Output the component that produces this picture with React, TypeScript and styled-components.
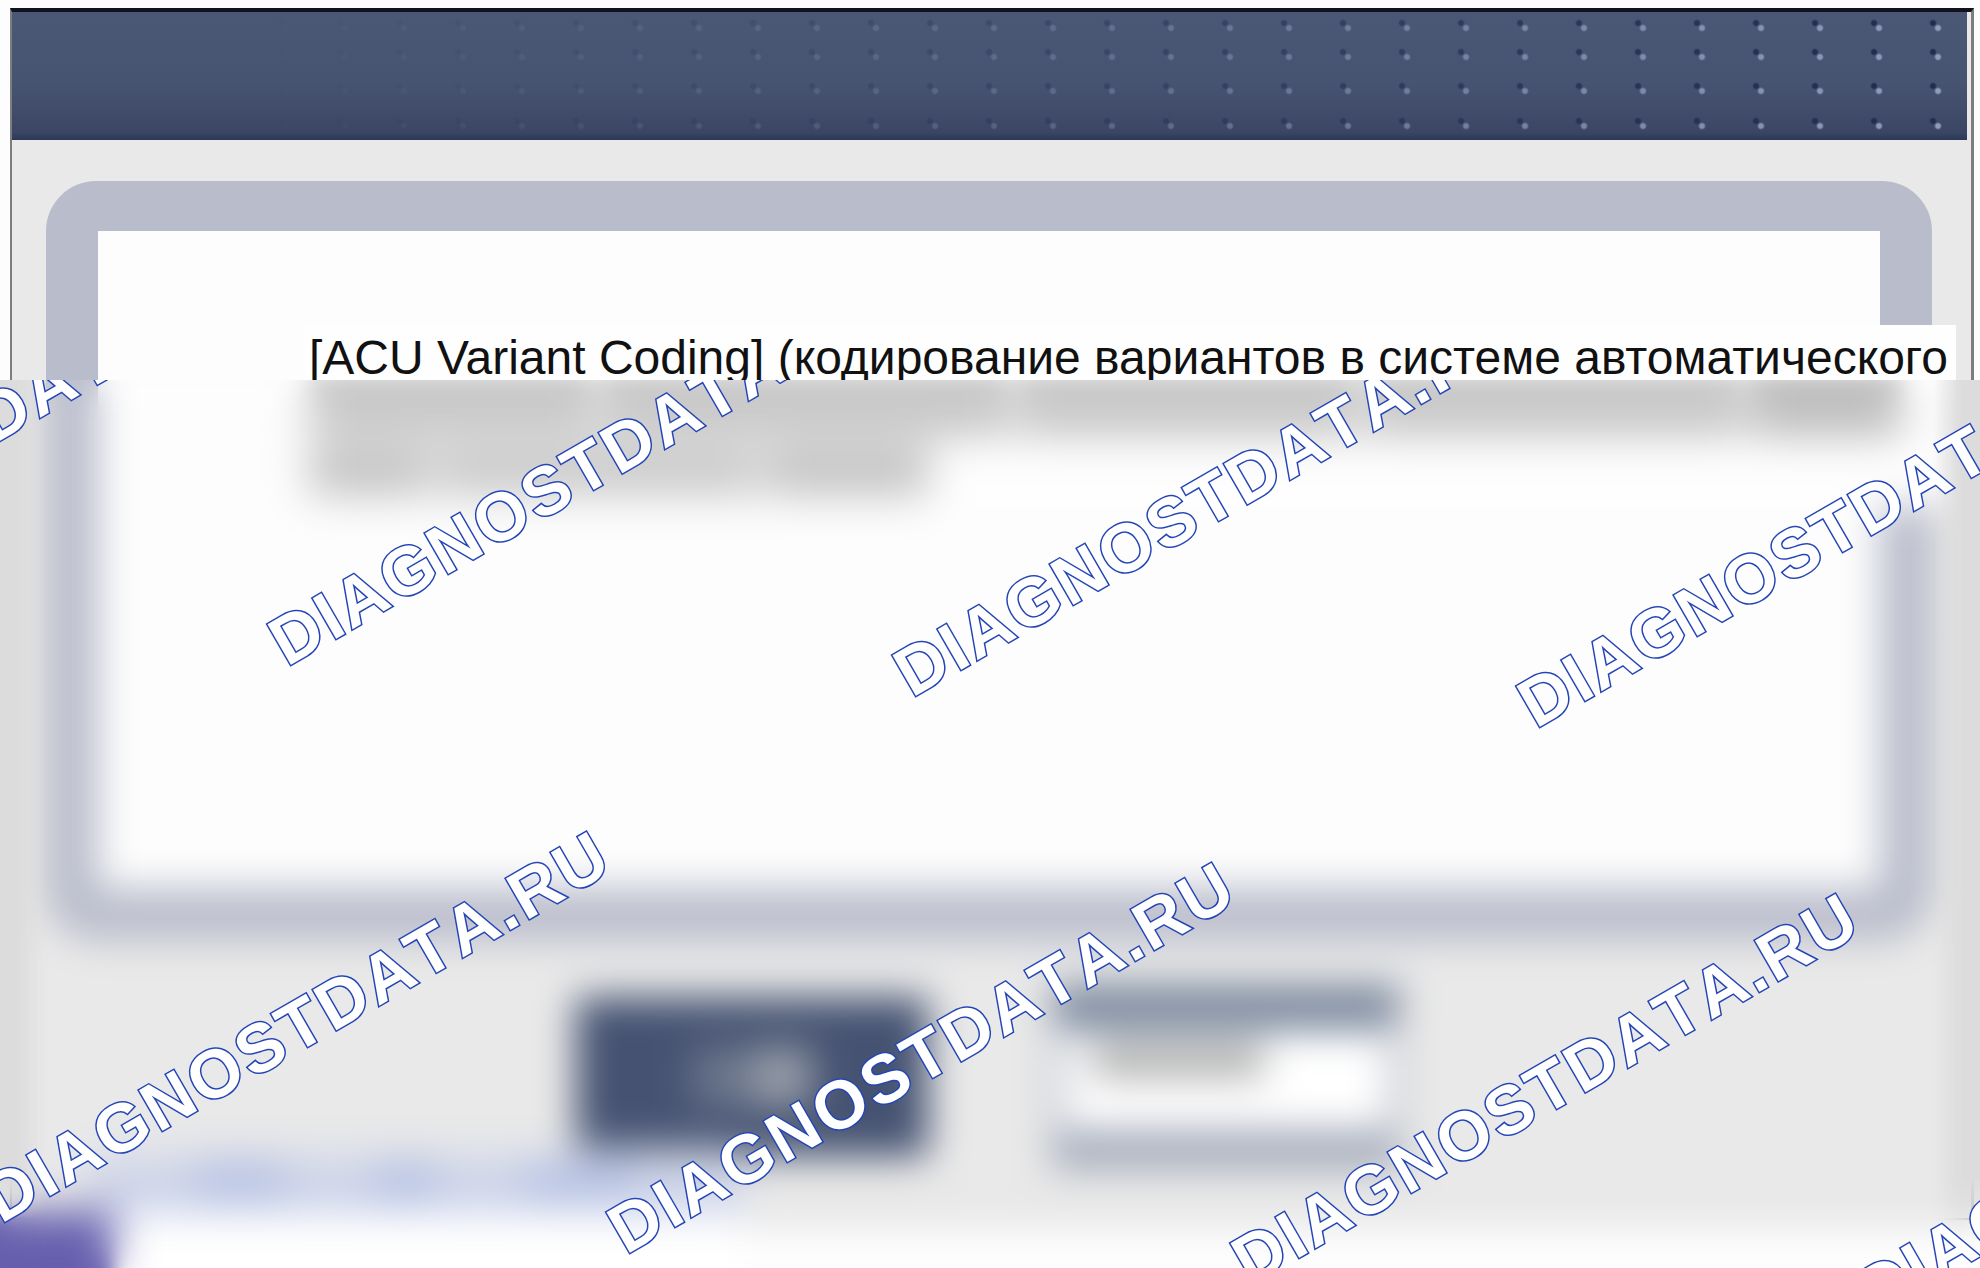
import React from "react";
import styled, { createGlobalStyle } from "styled-components";

const GlobalStyle = createGlobalStyle`
  * { box-sizing: border-box; }
  body {
    margin: 0;
    background: #fdfdfd;
    font-family: "Liberation Sans", Arial, sans-serif;
  }
`;

const Page = styled.div`
  position: relative;
  display: flex;
  flex-direction: column;
  min-height: 100vh;
  padding: 8px 6px 48px 10px;
  overflow: hidden;
`;

const Window = styled.main`
  flex: 1;
  display: flex;
  flex-direction: column;
  border: solid #7d7d7d;
  border-width: 4px 3px 2px 2px;
  border-top-color: #10121e;
  background: #e9e9e9;
`;

const TitleBar = styled.header`
  display: grid;
  grid-template-rows: 29px 34px 35px 20px;
  height: 128px;
  margin-right: 4px;
  padding: 5px 21px 0 0;
  background: linear-gradient(#4b5875 0%, #475471 55%, #3b4664 94%, #2c3858 100%);
`;

const DotRow = styled.div`
  height: 20px;
  background-image:
    radial-gradient(circle at 51px 11px, #8f9bb8 2px, transparent 4px),
    radial-gradient(circle at 46px 6px, #1f2d50 2px, transparent 4px);
  background-size: 59px 20px;
  background-position: right top;
  mask-image: linear-gradient(to right, transparent 12%, rgba(0, 0, 0, 0.35) 55%, #000 98%);
`;

const Body = styled.div`
  flex: 1;
  display: flex;
  flex-direction: column;
  gap: 46px;
  padding: 41px 39px 50px 34px;
`;

const Frame = styled.section`
  flex: 1;
  display: flex;
  border: 52px solid #b9bccb;
  border-top-width: 50px;
  border-radius: 50px;
  background: #fdfdfd;
`;

const Message = styled.div`
  align-self: flex-start;
  flex: 1;
  margin: 94px -76px 0 206px;
  padding: 10px 0 6px 5px;
  background: #fefefe;
`;

const MessageLine = styled.p`
  height: 45px;
  margin: 0;
  overflow: hidden;
  font-size: 48px;
  line-height: 46px;
  white-space: nowrap;
  color: #111;
`;

const FadedLine = styled.div`
  display: flex;
  gap: 8px;
  height: 56px;
  margin-bottom: 4px;
  filter: blur(10px);
  clip-path: inset(0 -40px -40px -40px);
`;

const Word = styled.span<{ $size: number; $tone?: string }>`
  width: ${(p) => p.$size}px;
  background: ${(p) => p.$tone ?? "#c4c4c4"};
`;

const Actions = styled.div`
  display: flex;
  justify-content: center;
  align-items: center;
  gap: 122px;
`;

const ActionButton = styled.button<{ $primary?: boolean }>`
  display: flex;
  align-items: ${(p) => (p.$primary ? "center" : "flex-start")};
  justify-content: ${(p) => (p.$primary ? "center" : "flex-start")};
  width: 352px;
  height: ${(p) => (p.$primary ? 160 : 182)}px;
  padding: ${(p) => (p.$primary ? "0" : "12px 0 0 28px")};
  border-style: solid;
  border-color: ${(p) => (p.$primary ? "#455271" : "#76849a #bcc1cc #a0a7b7")};
  border-width: ${(p) => (p.$primary ? "0" : "44px 14px 38px")};
  background: ${(p) => (p.$primary ? "#455271" : "#ffffff")};
`;

const Caption = styled.span<{ $primary?: boolean }>`
  width: ${(p) => (p.$primary ? 120 : 172)}px;
  height: ${(p) => (p.$primary ? 60 : 36)}px;
  background: ${(p) =>
    p.$primary ? "linear-gradient(to right, #6b768c 45%, #989ea9 55%)" : "#b0b0b0"};
`;

const Banner = styled.footer`
  position: absolute;
  left: 0;
  bottom: 0;
  width: 740px;
  filter: blur(8px);
`;

const BannerLink = styled.a`
  display: flex;
  justify-content: space-around;
  align-items: center;
  height: 62px;
  margin-left: 90px;
  padding: 0 60px;
  background: linear-gradient(#dde0e9, #c8d0e8 60%);
`;

const BannerWord = styled.span<{ $size: number }>`
  width: ${(p) => p.$size}px;
  height: 36px;
  background: #b4c0e4;
`;

const BannerBase = styled.div`
  display: flex;
  height: 80px;
  margin: 0 0 -24px -24px;
  background: #ffffff;
`;

const Emblem = styled.div`
  width: 138px;
  background: #665fae;
`;

const Veil = styled.div`
  position: absolute;
  top: 380px;
  right: 0;
  bottom: 0;
  left: 0;
  overflow: hidden;
  backdrop-filter: blur(19px);

  &::before,
  &::after {
    content: "";
    position: absolute;
    top: 0;
    bottom: 0;
    width: 46px;
  }

  &::before {
    left: 0;
    background: linear-gradient(to right, #dcdcdc 18px, transparent);
    mask-image: linear-gradient(#000 calc(100% - 90px), transparent calc(100% - 50px));
  }

  &::after {
    right: 0;
    background: linear-gradient(to left, #dcdcdc 18px, transparent);
    mask-image: linear-gradient(#000 calc(100% - 90px), transparent calc(100% - 30px));
  }
`;

const Mark = styled.span<{ $x: number; $y: number }>`
  position: absolute;
  z-index: 1;
  left: ${(p) => p.$x}px;
  top: ${(p) => p.$y}px;
  transform: translateY(-100%) rotate(-30deg);
  transform-origin: left bottom;
  font-size: 68px;
  font-weight: bold;
  font-kerning: none;
  line-height: 48px;
  letter-spacing: 3px;
  white-space: nowrap;
  color: #ffffff;
  -webkit-text-stroke: 3px #2445b5;
  paint-order: stroke fill;
`;

const marks = [
  { x: -338, y: 256 },
  { x: 287, y: 287 },
  { x: 912, y: 318 },
  { x: 1536, y: 349 },
  { x: 1, y: 844 },
  { x: 626, y: 875 },
  { x: 1250, y: 906 },
  { x: 1875, y: 937 },
];

export default function App() {
  return (
    <>
      <GlobalStyle />
      <Page>
        <Window>
          <TitleBar>
            <DotRow />
            <DotRow />
            <DotRow />
            <DotRow />
          </TitleBar>
          <Body>
            <Frame>
              <Message>
                <MessageLine>
                  [ACU Variant Coding] (кодирование вариантов в системе автоматического
                </MessageLine>
                <FadedLine>
                  <Word $size={285} />
                  <Word $size={408} />
                  <Word $size={338} />
                  <Word $size={378} />
                  <Word $size={152} $tone="#bababa" />
                </FadedLine>
                <FadedLine>
                  <Word $size={120} />
                  <Word $size={320} $tone="#cacaca" />
                  <Word $size={164} />
                </FadedLine>
              </Message>
            </Frame>
            <Actions>
              <ActionButton $primary type="button" aria-label="OK">
                <Caption $primary />
              </ActionButton>
              <ActionButton type="button" aria-label="Отмена">
                <Caption />
              </ActionButton>
            </Actions>
          </Body>
        </Window>
        <Banner>
          <BannerLink href="#" aria-label="DIAGNOSTDATA.RU">
            <BannerWord $size={90} />
            <BannerWord $size={60} />
            <BannerWord $size={110} />
          </BannerLink>
          <BannerBase>
            <Emblem />
          </BannerBase>
        </Banner>
        <Veil>
          {marks.map((m) => (
            <Mark key={`${m.x}:${m.y}`} $x={m.x} $y={m.y}>
              DIAGNOSTDATA.RU
            </Mark>
          ))}
        </Veil>
      </Page>
    </>
  );
}
